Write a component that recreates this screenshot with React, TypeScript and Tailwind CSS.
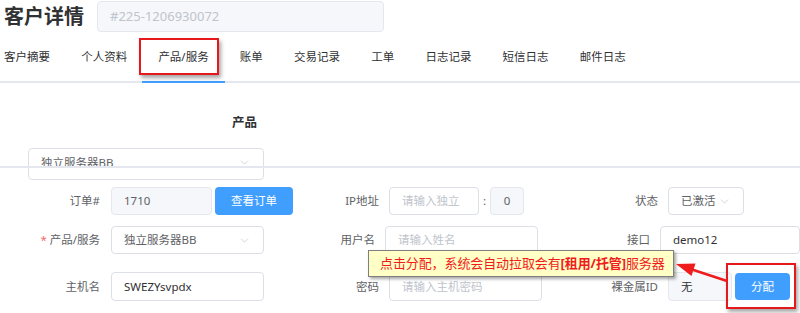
import { ChevronDown } from 'lucide-react'

const tabs = ['客户摘要', '个人资料', '产品/服务', '账单', '交易记录', '工单', '日志记录', '短信日志', '邮件日志']

function Field({
  children,
  className = '',
  tone = 'white',
}: {
  children?: React.ReactNode
  className?: string
  tone?: 'white' | 'gray'
}) {
  const bg = tone === 'gray' ? 'bg-[#f5f7fa] border-[#e4e7ed]' : 'bg-white border-[#dcdfe6]'
  return (
    <div className={['flex h-full items-center rounded-[4px] border px-[12px]', bg, className].join(' ')}>
      {children}
    </div>
  )
}

function Label({ children, w = 'w-[100px]' }: { children: React.ReactNode; w?: string }) {
  return <div className={[w, 'shrink-0 text-right text-[#606266]'].join(' ')}>{children}</div>
}

function Chevron() {
  return <ChevronDown className="ml-auto text-[#c0c4cc]" size={13} strokeWidth={1.3} />
}

export default function App() {
  return (
    <div
      className="relative h-[313px] w-[800px] overflow-hidden bg-white text-[11.5px] text-[#303133]"
      style={{ fontFamily: '"Noto Sans", "Noto Sans CJK SC", sans-serif' }}
    >
      {/* header */}
      <div className="flex h-[33px] items-center">
        <div className="w-[97px] pl-[4px] text-[20px] font-bold leading-none text-[#303133]">客户详情</div>
        <div className="flex h-[31px] w-[287px] items-center rounded-[4px] border border-[#e4e7ed] bg-[#f5f7fa] pl-[12px] text-[13px] text-[#c0c4cc]">
          #225-1206930072
        </div>
      </div>

      {/* tabs */}
      <div className="flex h-[50px] items-center gap-[31.2px] border-b-2 border-[#e4e7ed] pl-[4px]">
        {tabs.map((t) => (
          <div key={t} className="relative flex h-full items-center text-[#303133]">
            {t}
            {t === '产品/服务' && (
              <span className="absolute bottom-[-2px] left-[-16px] right-[-16px] h-[2px] bg-[#409eff]" />
            )}
          </div>
        ))}
      </div>

      {/* section */}
      <div className="mt-[32px] h-[16px] pl-[232px] text-[12.5px] font-bold leading-[16px]">产品</div>
      <div className="ml-[28px] mt-[17px] h-[32px] w-[236px]">
        <Field className="pb-[3px] text-[#606266]">
          独立服务器BB
          <Chevron />
        </Field>
      </div>

      {/* row 1 */}
      <div className="mt-[7px] flex h-[28px] items-center">
        <div className="flex h-full w-[278px] items-center">
          <Label>订单#</Label>
          <div className="ml-[11px] flex h-full">
            <Field tone="gray" className="w-[101px] text-[#606266]">1710</Field>
            <button className="ml-[3px] h-full w-[78px] rounded-[4px] bg-[#409eff] text-white">查看订单</button>
          </div>
        </div>
        <div className="flex h-full w-[280px] items-center">
          <Label w="w-[101px]">IP地址</Label>
          <div className="ml-[10px] flex h-full items-center">
            <Field className="w-[90px] overflow-hidden whitespace-nowrap text-[#c0c4cc]">请输入独立</Field>
            <span className="mx-[4px] text-[#606266]">:</span>
            <Field tone="gray" className="w-[34px] justify-center px-0 text-[#606266]">0</Field>
          </div>
        </div>
        <div className="flex h-full items-center">
          <Label>状态</Label>
          <div className="ml-[10px] h-full w-[76px]">
            <Field className="text-[#606266]">
              已激活
              <Chevron />
            </Field>
          </div>
        </div>
      </div>

      {/* row 2 */}
      <div className="mt-[11px] flex h-[28px] items-center">
        <div className="flex h-full w-[278px] items-center">
          <Label>
            <span className="text-[#f56c6c]">*</span> 产品/服务
          </Label>
          <div className="ml-[11px] h-full w-[153px]">
            <Field className="text-[#606266]">
              独立服务器BB
              <Chevron />
            </Field>
          </div>
        </div>
        <div className="flex h-full w-[280px] items-center">
          <Label w="w-[101px]">用户名</Label>
          <div className="ml-[10px] h-full w-[153px]">
            <Field className="text-[#c0c4cc]">请输入姓名</Field>
          </div>
        </div>
        <div className="flex h-full items-center">
          <Label>接口</Label>
          <div className="ml-[10px] h-full w-[140px]">
            <Field className="text-[#303133]">demo12</Field>
          </div>
        </div>
      </div>

      {/* row 3 */}
      <div className="mt-[18px] flex h-[29px] items-center">
        <div className="flex h-full w-[278px] items-center">
          <Label>主机名</Label>
          <div className="ml-[11px] h-full w-[153px]">
            <Field className="text-[#303133]">SWEZYsvpdx</Field>
          </div>
        </div>
        <div className="flex h-full w-[280px] items-center">
          <Label w="w-[101px]">密码</Label>
          <div className="ml-[10px] h-full w-[153px]">
            <Field className="text-[#c0c4cc]">请输入主机密码</Field>
          </div>
        </div>
        <div className="flex h-full items-center">
          <Label>裸金属ID</Label>
          <div className="ml-[10px] flex h-full items-center">
            <Field tone="gray" className="w-[64px] text-[#303133]">无</Field>
            <button className="ml-[3px] h-[27px] w-[55px] rounded-[4px] bg-[#409eff] text-white">分配</button>
          </div>
        </div>
      </div>

      {/* overlays */}
      <div className="pointer-events-none absolute left-0 top-[166px] h-[1.5px] w-full bg-[#e4e7ed]" />
      <div className="pointer-events-none absolute left-[139px] top-[38px] h-[37px] w-[80px] border-2 border-[#e5191b] shadow-[2px_3px_4px_rgba(0,0,0,0.35)]" />
      <div className="pointer-events-none absolute left-[726px] top-[263px] h-[46px] w-[70px] border-2 border-[#e5191b] shadow-[2px_3px_4px_rgba(0,0,0,0.35)]" />
      <div className="absolute left-[368px] top-[250px] h-[27px] w-[306px] whitespace-nowrap border border-[#7f7f7f] bg-[#ffffc6] pl-[11px] text-[13px] leading-[25px] tracking-[-0.1px] text-[#f01c1c] shadow-[2px_2px_3px_rgba(0,0,0,0.35)]">
        点击分配，系统会自动拉取会有<span className="font-bold">[租用/托管]</span>服务器
      </div>
      <svg className="pointer-events-none absolute left-0 top-0" width="800" height="313">
        <line x1="727" y1="281" x2="692" y2="269.5" stroke="#ee1c1c" strokeWidth="2.5" />
        <polygon points="676,264 695.5,263.5 691.5,276" fill="#ee1c1c" />
      </svg>
    </div>
  )
}
